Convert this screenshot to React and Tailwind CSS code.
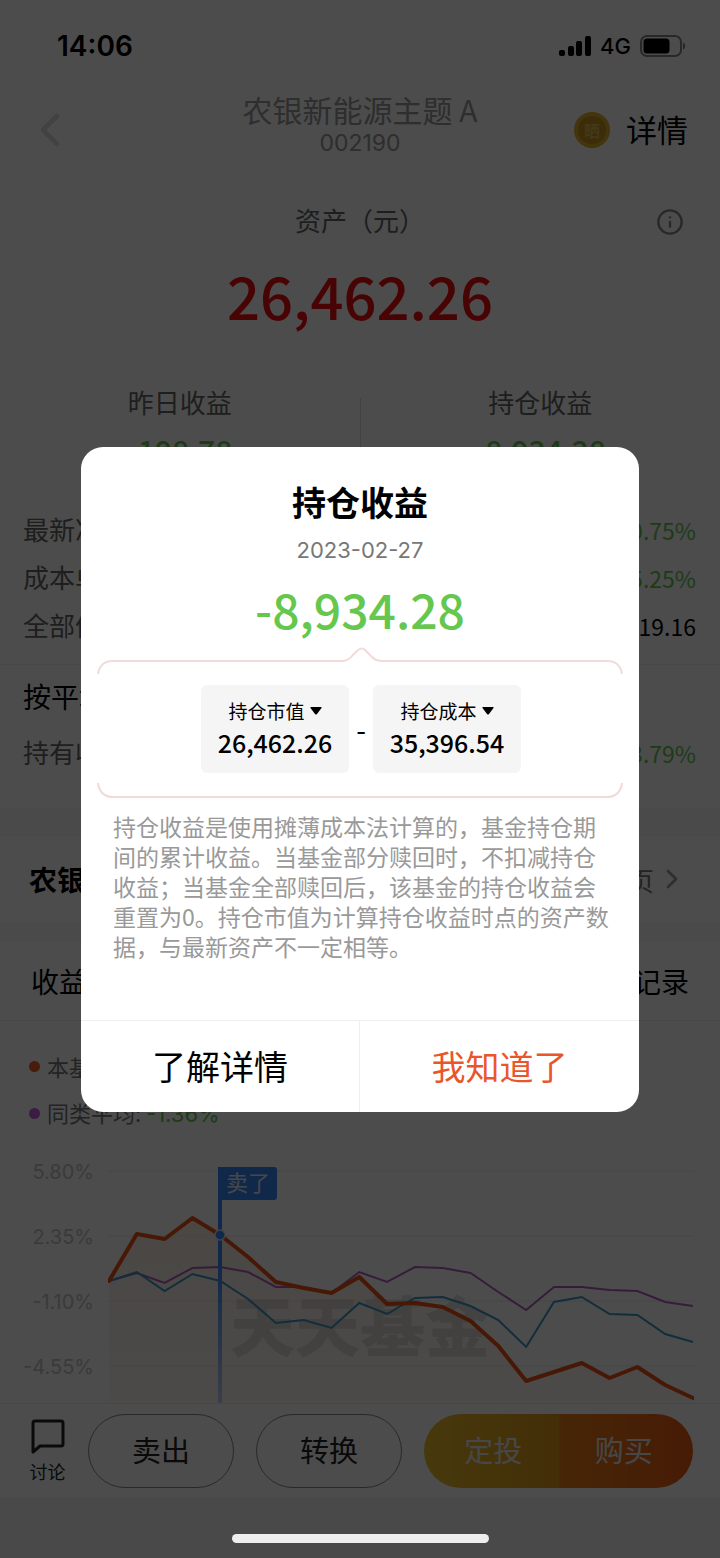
import clsx from 'clsx'
import { ChevronLeft, ChevronRight, Info } from 'lucide-react'

const GRID_LABELS = ['5.80%', '2.35%', '-1.10%', '-4.55%']

// Chart y values share one x step of 28 units
const FUND = [120, 73, 78, 57, 74, 96, 121, 127, 132, 116, 143, 142, 146, 160, 185, 220, 211, 202, 217, 206, 224, 237]
const PEERS = [120, 112, 122, 107, 106, 111, 126, 126, 132, 111, 121, 106, 107, 112, 131, 149, 126, 126, 129, 130, 141, 145]
const INDEX = [120, 111, 130, 113, 120, 138, 162, 159, 167, 142, 153, 137, 136, 145, 159, 186, 141, 136, 153, 154, 173, 181]

const DETAIL_ROWS = [
  { label: '最新净值', value: '-0.75%', green: true },
  { label: '成本单价', value: '-25.25%', green: true },
  { label: '全部份额', value: '10,419.16', green: false },
]

function toPoints(values) {
  return values.map((y, i) => `${1 + (i * 584) / 21},${y}`).join(' ')
}

function StatusBar() {
  return (
    <div className="flex h-[92px] items-center justify-between pr-[34px] pl-[57px] font-['Inter',sans-serif] text-black">
      <span className="text-[28px] font-semibold">14:06</span>
      <div className="flex items-center gap-[9px]">
        <svg className="h-5 w-8" viewBox="0 0 32 20">
          <rect x="0" y="14" width="6" height="6" rx="2" />
          <rect x="9" y="10" width="6" height="10" rx="2" />
          <rect x="17" y="5" width="6" height="15" rx="2" />
          <rect x="26" y="0" width="6" height="20" rx="2" />
        </svg>
        <span className="text-[22px] font-medium">4G</span>
        <svg className="h-[22px] w-[46px]" viewBox="0 0 46 22">
          <rect x="1" y="1" width="40" height="20" rx="6" fill="none" stroke="#888" strokeWidth="2" />
          <rect x="3.5" y="3.5" width="26" height="15" rx="3.5" />
          <path d="M43 7.5c3 1 3 6 0 7z" fill="#888" />
        </svg>
      </div>
    </div>
  )
}

function Header() {
  return (
    <header className="grid h-[72px] grid-cols-[1fr_auto_1fr] items-center">
      <button aria-label="返回" className="justify-self-start pl-[22px] text-[#ddd]">
        <ChevronLeft className="size-14" strokeWidth={2} />
      </button>
      <div className="pb-2 text-center text-[#999]">
        <h1 className="text-[30px] leading-[34px]">农银新能源主题 A</h1>
        <p className="font-['Inter',sans-serif] text-[23px] leading-[34px]">002190</p>
      </div>
      <div className="flex items-center justify-self-end gap-4 pr-8">
        <span className="flex size-9 items-center justify-center rounded-full border-4 border-[#e0b428] bg-[#c89420] text-base leading-none font-bold text-[#e0bc50]">晒</span>
        <button className="pb-[2px] text-[31px] text-black">详情</button>
      </div>
    </header>
  )
}

function Assets() {
  return (
    <section className="pt-7">
      <div className="grid h-14 grid-cols-[1fr_auto_1fr] items-center">
        <p className="col-start-2 pb-[2px] text-[26px] text-[#666]">资产（元）</p>
        <button aria-label="说明" className="justify-self-end pt-1 pr-9 text-[#888]"><Info className="size-7" strokeWidth={2} /></button>
      </div>
      <p className="mt-[7px] text-center text-[58px] leading-[80px] font-medium text-[#f01010]">26,462.26</p>
      <div className="mt-[45px] flex h-[122px] pt-[2px] text-center">
        <Profit label="昨日收益" value="-198.78" />
        <div className="mt-[16px] h-20 w-px bg-[#ddd]" />
        <Profit label="持仓收益" value="-8,934.28" />
      </div>
    </section>
  )
}

function Profit({ label, value }) {
  return (
    <div className="flex-1">
      <p className="text-[26px] leading-10 text-[#666]">{label}</p>
      <p className="mt-2 text-[30px] leading-10 font-medium text-[#65c74e]">{value}</p>
    </div>
  )
}

function Row({ label, value, green }) {
  return (
    <div className="flex h-12 items-center justify-between text-[26px] text-[#666]">
      <span>{label}</span>
      <span className={clsx('pt-1 text-[23px]', green ? 'text-[#65c74e]' : 'text-black')}>{value}</span>
    </div>
  )
}

function Details() {
  return (
    <section>
      <div className="h-[163px] border-b border-[#eee] pr-6 pl-[23px] pt-[2px]">
        {DETAIL_ROWS.map((row) => <Row key={row.label} {...row} />)}
      </div>
      <div className="h-[143px] pr-6 pl-[23px]">
        <h2 className="pt-[10px] text-[28px] leading-[42px] text-black">按平均</h2>
        <div className="mt-[10px]"><Row label="持有收益率" value="-23.79%" green /></div>
      </div>
      <a href="#fund" className="flex h-[134px] items-center justify-between border-y-[28px] border-b-[20px] border-[#f8f8f8] pr-8 pl-[29px]">
        <span className="text-[28px] font-bold text-black">农银新</span>
        <span className="flex items-center text-[26px] text-[#777]">页<ChevronRight className="ml-[2px] size-8 text-[#999]" strokeWidth={2} /></span>
      </a>
      <div className="flex h-[79px] items-center justify-between border-b border-[#eee] px-[31px] text-[28px] text-black">
        <button>收益走势</button>
        <button>交易记录</button>
      </div>
    </section>
  )
}

function Chart() {
  return (
    <section>
      <ul className="pt-[22px] pl-[29px] text-[22px] leading-[46px] text-[#777]">
        <li className="flex items-center gap-[7px]"><i className="size-[11px] rounded-full bg-[#f55a22]" /><span>本基金</span></li>
        <li className="flex items-center gap-[7px]"><i className="size-[11px] rounded-full bg-[#c95fe0]" /><span>同类平均: <b className="font-['Inter',sans-serif] font-normal text-[#65c74e]">-1.36%</b></span></li>
      </ul>
      <div className="flex pr-[26px]">
        <div className="w-[94px] pt-[3px] text-right font-['Inter',sans-serif] text-[20px] leading-[65px] text-[#c4c4c4]">
          {GRID_LABELS.map((label) => <p key={label}>{label}</p>)}
        </div>
        <svg className="mt-[24px] ml-[14px] block h-[242px] flex-1" viewBox="0 0 586 242" preserveAspectRatio="none">
          <defs>
            <linearGradient id="fund-area" x1="0" y1="0" x2="0" y2="1">
              <stop offset="0" stopColor="#f5e4d4" />
              <stop offset="1" stopColor="#f8f2ec" stopOpacity="0.6" />
            </linearGradient>
            <linearGradient id="flag-pole" x1="0" y1="0" x2="0" y2="1">
              <stop offset="0" stopColor="#3785f5" />
              <stop offset="0.4" stopColor="#3785f5" />
              <stop offset="1" stopColor="#bdd3f2" />
            </linearGradient>
          </defs>
          {[10, 75, 140, 205].map((y) => <path key={y} d={`M0 ${y}H586`} stroke="#efefef" strokeWidth="1.5" />)}
          <polygon points={`1,242 ${toPoints(FUND)} 585,242`} fill="url(#fund-area)" opacity="0.7" />
          <text x="122" y="190" fontSize="65" fontWeight="900" fill="#b8b4b0" opacity="0.4">天天基金</text>
          <polyline points={toPoints(PEERS)} fill="none" stroke="#b45fc4" strokeWidth="2" />
          <polyline points={toPoints(INDEX)} fill="none" stroke="#3f96c8" strokeWidth="2" />
          <polyline points={toPoints(FUND)} fill="none" stroke="#f05018" strokeWidth="4" strokeLinejoin="round" strokeLinecap="round" />
          <rect x="110" y="6" width="4" height="236" fill="url(#flag-pole)" />
          <rect x="110" y="6" width="59" height="33" rx="3" fill="#3785f5" />
          <text x="118" y="30" fontSize="22" fill="#e8f0fc">卖了</text>
          <circle cx="112" cy="74" r="5" fill="#3785f5" stroke="#d8e6fc" strokeWidth="1.5" />
        </svg>
      </div>
    </section>
  )
}

function ActionBar() {
  return (
    <footer>
      <div className="grid h-[94px] grid-cols-[37px_146fr_146fr_269fr] items-center gap-[22px] border-t border-[#eee] pr-[27px] pl-[29px] text-[29px] text-[#222]">
        <button className="flex flex-col items-center text-lg leading-6">
          <svg className="mb-1 h-9 w-[34px]" viewBox="0 0 34 36" fill="none" stroke="#222" strokeWidth="3" strokeLinejoin="round">
            <path d="M4 2h26q2 0 2 2v21q0 2-2 2H9l-7 6V4q0-2 2-2z" />
          </svg>
          讨论
        </button>
        <button className="h-[74px] rounded-full border border-[#888] pb-[2px]">卖出</button>
        <button className="h-[74px] rounded-full border border-[#888] pb-[2px]">转换</button>
        <div className="grid h-[74px] grid-cols-2 overflow-hidden rounded-full text-[#eee]">
          <button className="bg-linear-to-r from-[#eebe2c] to-[#e09a18] pb-[2px] pl-1">定投</button>
          <button className="bg-linear-to-r from-[#e88018] to-[#ee5a14] pr-1 pb-[2px]">购买</button>
        </div>
      </div>
      <div className="h-[61px] bg-[#f4f4f4]" />
    </footer>
  )
}

function Figure({ label, value }) {
  return (
    <button className="h-[88px] w-[148px] rounded-md bg-[#f5f5f5] text-black">
      <span className="flex items-center justify-center gap-[5px] text-[19px] leading-7">
        {label}
        <svg className="h-2 w-3" viewBox="0 0 12 8"><path d="M1 0h10q1 0 .5 1L7 7q-1 1-2 0L.5 1Q0 0 1 0z" /></svg>
      </span>
      <span className="mt-px block pb-[3px] text-[25px] leading-8 font-medium">{value}</span>
    </button>
  )
}

function ProfitDialog() {
  return (
    <div role="dialog" aria-labelledby="dialog-title" className="w-[558px] overflow-hidden rounded-[22px] bg-white pt-[33px] text-center">
      <h2 id="dialog-title" className="text-[34px] leading-[44px] font-bold text-black">持仓收益</h2>
      <p className="mt-[10px] font-['Inter',sans-serif] text-[22px] leading-8 text-[#777]">2023-02-27</p>
      <p className="mt-[12px] text-[48px] leading-[60px] font-medium text-[#65c74e]">-8,934.28</p>

      <div className="mt-[9px] px-4">
        <svg className="block w-full" viewBox="0 0 526 28" fill="none" stroke="#f2dada" strokeWidth="2">
          <path d="M1 27Q3 14 16 14H245Q251 14 255 9L261 3Q265 0 268 3L275 10Q279 14 285 14H510Q523 14 525 27" />
        </svg>
        <div className="mt-[10px] flex items-center justify-center pl-[2px]">
          <Figure label="持仓市值" value="26,462.26" />
          <span className="w-6 text-[28px] text-black">-</span>
          <Figure label="持仓成本" value="35,396.54" />
        </div>
        <svg className="mt-[9px] block w-full" viewBox="0 0 526 16" fill="none" stroke="#f2dada" strokeWidth="2">
          <path d="M1 1Q3 15 16 15H510Q523 15 525 1" />
        </svg>
      </div>

      <p className="mt-[13px] pr-6 pl-8 text-left text-[23px] leading-[30px] text-[#999]">
        持仓收益是使用摊薄成本法计算的，基金持仓期间的累计收益。当基金部分赎回时，不扣减持仓收益；当基金全部赎回后，该基金的持仓收益会重置为0。持仓市值为计算持仓收益时点的资产数据，与最新资产不一定相等。
      </p>

      <div className="mt-[59px] grid h-[92px] grid-cols-2 border-t border-[#eee] text-[34px]">
        <button className="border-r border-[#eee] pb-[2px] text-black">了解详情</button>
        <button className="pb-[2px] text-[#e9562b]">我知道了</button>
      </div>
    </div>
  )
}

export default function App() {
  return (
    <div className="relative min-h-screen bg-white font-['Noto_Sans_CJK_SC',sans-serif]">
      <StatusBar />
      <Header />
      <main>
        <Assets />
        <Details />
        <Chart />
      </main>
      <ActionBar />
      <div className="absolute inset-0 flex items-center justify-center bg-black/70">
        <ProfitDialog />
      </div>
      <div className="absolute inset-x-0 bottom-[15px] mx-auto h-[9px] w-[257px] rounded-full bg-[#eee]" />
    </div>
  )
}
